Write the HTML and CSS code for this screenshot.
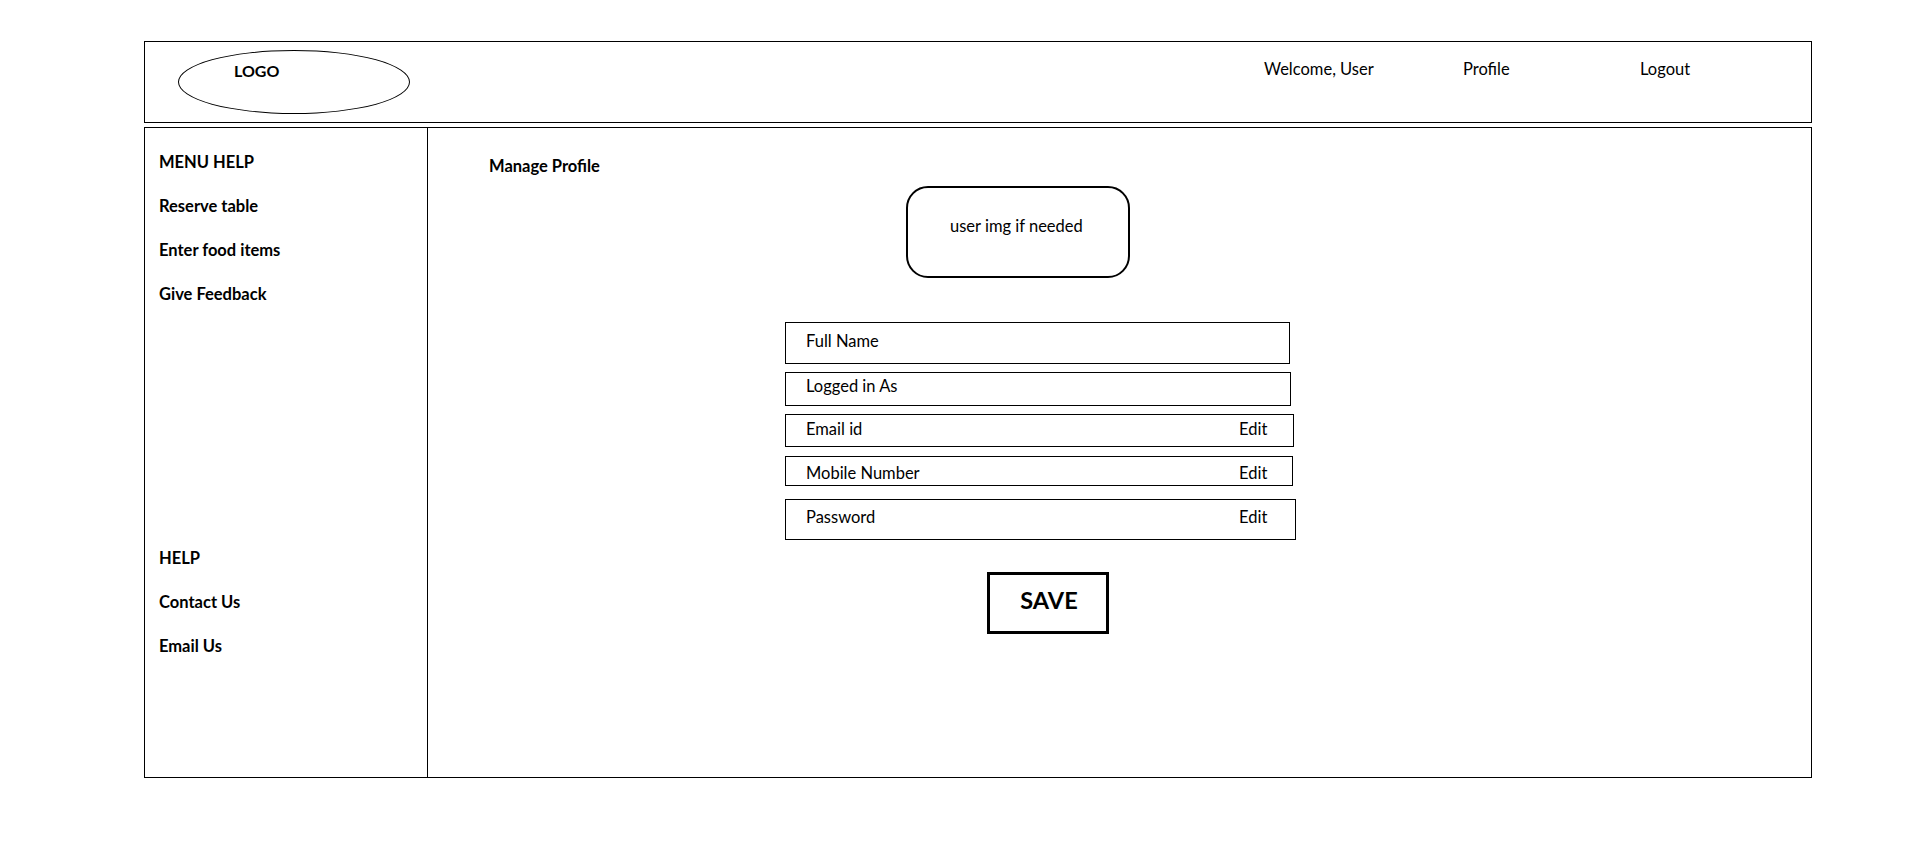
FILE: index.html
```html
<!DOCTYPE html>
<html lang="en">
<head>
<meta charset="utf-8">
<title>Manage Profile</title>
<link rel="stylesheet" href="styles.css">
</head>
<body>
<div class="page">
  <header class="topbar">
    <div class="logo"><span class="logo-text">LOGO</span></div>
    <nav class="nav">
      <span class="nav-item nav-welcome">Welcome, User</span>
      <span class="nav-item nav-profile">Profile</span>
      <span class="nav-item">Logout</span>
    </nav>
  </header>
  <main class="main">
    <aside class="sidebar">
      <div class="side-group">
        <div class="side-item">MENU HELP</div>
        <div class="side-item">Reserve table</div>
        <div class="side-item">Enter food items</div>
        <div class="side-item">Give Feedback</div>
      </div>
      <div class="side-group side-help">
        <div class="side-item">HELP</div>
        <div class="side-item">Contact Us</div>
        <div class="side-item">Email Us</div>
      </div>
    </aside>
    <section class="panel">
      <h1 class="panel-title">Manage Profile</h1>
      <div class="avatar">user img if needed</div>
      <div class="fields">
        <div class="field f-name"><span>Full Name</span></div>
        <div class="field f-login"><span>Logged in As</span></div>
        <div class="field f-email"><span>Email id</span><span>Edit</span></div>
        <div class="field f-mobile"><span>Mobile Number</span><span>Edit</span></div>
        <div class="field f-pass"><span>Password</span><span>Edit</span></div>
      </div>
      <button class="save" type="button">SAVE</button>
    </section>
  </main>
</div>
</body>
</html>
```
FILE: styles.css
```css
* { box-sizing: border-box; }
html, body { margin: 0; padding: 0; background: #fff; }
body {
  font-family: Lato, "Open Sans", sans-serif;
  font-size: 16.5px;
  line-height: 20px;
  color: #000;
}
.page {
  padding: 41px 0 0 144px;
  width: 1812px;
}
.topbar {
  display: flex;
  align-items: flex-start;
  height: 82px;
  border: 1px solid #000;
}
.logo {
  margin: 8px 0 0 33px;
  width: 232px;
  height: 64px;
  border: 1px solid #000;
  border-radius: 50%;
  padding: 10px 0 0 55px;
  flex: none;
}
.logo-text {
  font-weight: 700;
  font-size: 16px;
  line-height: 20px;
  display: block;
}
.nav {
  display: flex;
  margin: 17px 0 0 854px;
}
.nav-item { display: block; }
.nav-welcome { width: 199px; }
.nav-profile { width: 177px; }

.main {
  display: flex;
  margin-top: 4px;
  height: 651px;
  border: 1px solid #000;
}
.sidebar {
  width: 283px;
  flex: none;
  border-right: 1px solid #000;
  margin-bottom: -4px;
  padding: 24px 0 0 14px;
  font-weight: 700;
}
.side-group {
  display: flex;
  flex-direction: column;
  gap: 24px;
}
.side-help { margin-top: 244px; }

.panel {
  flex: 1;
  padding: 28px 0 0 61px;
}
.panel-title {
  margin: 0;
  font-size: 16.5px;
  font-weight: 700;
  line-height: 20px;
}
.avatar {
  margin: 10px 0 0 417px;
  width: 224px;
  height: 92px;
  border: 2px solid #000;
  border-radius: 22px;
  padding: 28px 0 0 42px;
}
.fields {
  margin: 44px 0 0 296px;
  display: flex;
  flex-direction: column;
}
.field {
  display: grid;
  grid-template-columns: 433px auto;
  border: 1px solid #000;
  padding-left: 20px;
}
.f-name { width: 505px; height: 42px; padding-top: 8px; }
.f-login { width: 506px; height: 34px; padding-top: 3px; margin-top: 8px; }
.f-email { width: 509px; height: 33px; padding-top: 4px; margin-top: 8px; }
.f-mobile { width: 508px; height: 30px; padding-top: 6px; margin-top: 9px; }
.f-pass { width: 511px; height: 41px; padding-top: 7px; margin-top: 13px; }

.save {
  display: flex;
  align-items: center;
  justify-content: center;
  margin: 32px 0 0 498px;
  width: 122px;
  height: 62px;
  border: 3px solid #000;
  background: #fff;
  font-family: Lato, "Open Sans", sans-serif;
  font-weight: 700;
  font-size: 23.5px;
  color: #000;
  padding: 0 0 6px 2px;
}
```
